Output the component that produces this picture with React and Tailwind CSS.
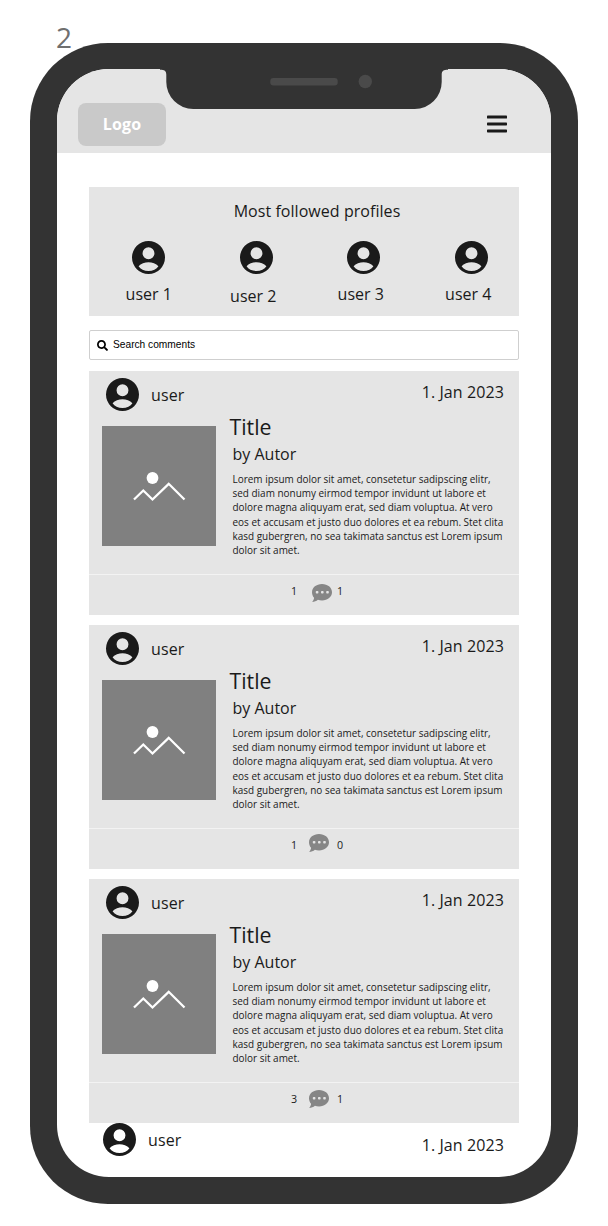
import { FaSearch } from "react-icons/fa";

const LOREM = [
  "Lorem ipsum dolor sit amet, consetetur sadipscing elitr,",
  "sed diam nonumy eirmod tempor invidunt ut labore et",
  "dolore magna aliquyam erat, sed diam voluptua. At vero",
  "eos et accusam et justo duo dolores et ea rebum. Stet clita",
  "kasd gubergren, no sea takimata sanctus est Lorem ipsum",
  "dolor sit amet.",
];

function Avatar() {
  return (
    <svg viewBox="2 2 20 20" className="block size-[33px] shrink-0" fill="#1a1a1a">
      <path
        fillRule="evenodd"
        d="M12 2a10 10 0 1 0 0 20 10 10 0 0 0 0-20zm0 3.800a3.600 3.600 0 1 1 0 7.200A3.600 3.600 0 0 1 12 5.800zM6 17.300C7.300 15.700 9.800 14.900 12 14.900s4.700.8 6 2.400c-1.100 1.800-3.400 2.900-6 2.900s-4.900-1.100-6-2.900z"
      />
    </svg>
  );
}

function Bubble() {
  return (
    <svg viewBox="0 0 20 18" className="block h-[18px] w-5 shrink-0">
      <path fill="#868686" d="M10 0c5.700 0 10 3.600 10 8.200s-4.300 8.200-10 8.200c-1.500 0-2.900-.2-4.100-.7C4.400 17 2.300 17.900.2 17.900c1-1 1.700-2.500 1.900-4.100C.8 12.300 0 10.300 0 8.200 0 3.600 4.300 0 10 0z" />
      <g fill="#e5e5e5">
        <rect x="3.800" y="7" width="2.600" height="2.600" rx=".8" />
        <rect x="9" y="7" width="2.600" height="2.600" rx=".8" />
        <rect x="14.200" y="7" width="2.600" height="2.600" rx=".8" />
      </g>
    </svg>
  );
}

function Placeholder() {
  return (
    <svg viewBox="0 0 114 120" className="block h-[120px] w-[114px] shrink-0 bg-[#808080]">
      <circle cx="50.500" cy="52" r="5.900" fill="#fff" />
      <path d="M32 73.500l9.300-9 9.200 9L66.700 57.800 82.500 73.500" fill="none" stroke="#fff" strokeWidth="2.300" />
    </svg>
  );
}

function Post({ likes, comments, bubble }) {
  return (
    <article className="flex h-[244px] shrink-0 flex-col bg-[#e5e5e5]">
      <div className="flex h-[45px] items-start justify-between pl-[17px] pr-[15px] pt-[7px]">
        <div className="flex items-center gap-[12px]">
          <Avatar />
          <span className="tracking-[0.1px]">user</span>
        </div>
        <span className="pt-[2px] leading-6 tracking-[0.100px]">1. Jan 2023</span>
      </div>
      <div className="flex h-[158px] gap-[14px] pl-[13px]">
        <div className="pt-[10px]"><Placeholder /></div>
        <div className="-mt-px whitespace-nowrap">
          <h2 className="-ml-[0.500px] text-[21.300px] leading-[24px]">Title</h2>
          <div className="pl-[2.500px]">
            <p className="pt-[3px] leading-[24px]">by Autor</p>
            <p className="pt-[6px] text-[9.960px] leading-[14.200px]">
              {LOREM.map((line) => <span key={line} className="block">{line}</span>)}
            </p>
          </div>
        </div>
      </div>
      <footer className="flex h-[41px] items-start border-t border-[#f3f3f3] pl-[202px] text-[10.700px]">
        <span className="w-[18px] pt-[8px] leading-4">{likes}</span>
        <div className={bubble}><Bubble /></div>
        <span className="pt-[8px] leading-4">{comments}</span>
      </footer>
    </article>
  );
}

export default function App() {
  return (
    <div className="h-[1226px] w-[608px] overflow-hidden bg-white font-['Open_Sans','Noto_Sans',sans-serif] text-[16px] text-[#1a1a1a]">
      <div className="h-[43px] pl-[56px] pt-[18px] text-[28px] leading-[38px] text-[#6f6f6f]">2</div>
      <div className="relative ml-[30px] h-[1161px] w-[548px] rounded-[78px] bg-[#333] px-[27px] pt-[26px]">
        <div className="flex h-[1108px] flex-col overflow-hidden rounded-[52px] bg-white">
          <header className="flex h-[84px] shrink-0 items-start justify-between bg-[#e5e5e5] pl-[21px] pr-[44px] pt-[34px]">
            <div className="flex h-[43px] w-[88px] items-center justify-center rounded-lg bg-[#c9c9c9] pb-px font-bold tracking-[0.200px] text-white">Logo</div>
            <svg viewBox="0 0 20 18" className="mt-[12px] h-[18px] w-5" fill="#1a1a1a">
              <rect y=".6" width="20" height="3" rx=".7" />
              <rect y="7.500" width="20" height="3" rx=".7" />
              <rect y="14.400" width="20" height="3" rx=".7" />
            </svg>
          </header>
          <main className="flex min-h-0 flex-1 flex-col px-8 pt-[34px]">
            <section className="h-[129px] shrink-0 bg-[#e5e5e5] pt-[12px]">
              <h1 className="pl-[26px] text-center leading-6 tracking-[0.050px]">Most followed profiles</h1>
              <div className="ml-[6px] mr-[-6px] grid grid-cols-4 pt-[18px]">
                {[1, 2, 3, 4].map((n) => (
                  <div key={n} className="flex flex-col items-center">
                    <Avatar />
                    <span className={n === 2 ? "mr-[6px] pt-[10px] leading-6" : n === 1 ? "pt-[8px] leading-6" : "mr-[6px] pt-[8px] leading-6"}>user {n}</span>
                  </div>
                ))}
              </div>
            </section>
            <div className="mt-[14px] flex h-[30px] shrink-0 items-center gap-[5px] rounded-[2px] border border-[#cfcfcf] pl-[7px] font-['Liberation_Sans',Arial,sans-serif] text-[10.200px] text-black">
              <FaSearch className="size-[11px]" />
              <span className="pb-px">Search comments</span>
            </div>
            <div className="flex flex-col gap-[10px] pt-[11px]">
              <Post likes={1} comments={1} bubble="mt-[9px] ml-[3px] w-[25px]" />
              <Post likes={1} comments={0} bubble="mt-[5px] w-[28px]" />
              <Post likes={3} comments={1} bubble="mt-[7px] w-[28px]" />
            </div>
            <div className="flex shrink-0 items-start justify-between pl-[14px] pr-[15px]">
              <div className="flex items-center gap-[12px]"><Avatar /><span className="tracking-[0.1px]">user</span></div>
              <span className="pt-[10px] leading-6 tracking-[0.100px]">1. Jan 2023</span>
            </div>
          </main>
        </div>
        <svg viewBox="0 0 288 41" className="absolute left-[130px] top-[26px] h-[41px] w-[288px]">
          <path d="M0 0v.8c4.500 0 6.300 1 6.300 5V13A27 27 0 0 0 33.300 40H254.700A27 27 0 0 0 281.700 13V5.800C281.700 1.800 283.500 .8 288 .8V0z" fill="#333" />
          <rect x="110.300" y="9" width="67.400" height="7.500" rx="3" fill="#4a4a4a" />
          <circle cx="205.300" cy="12.500" r="6.700" fill="#4a4a4a" />
        </svg>
      </div>
    </div>
  );
}
